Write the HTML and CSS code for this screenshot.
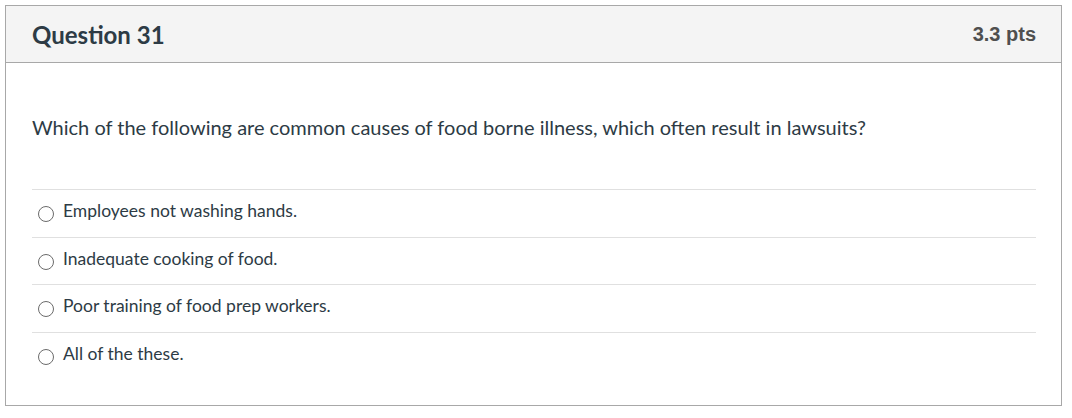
FILE: index.html
```html
<!DOCTYPE html>
<html>
<head>
<meta charset="utf-8">
<link rel="stylesheet" href="styles.css">
</head>
<body>
<div class="question">
  <div class="header">
    <span class="title">Question 31</span>
    <span class="pts">3.3 pts</span>
  </div>
  <div class="content">
    <p class="text">Which of the following are common causes of food borne illness, which often result in lawsuits?</p>
    <div class="answers">
      <label class="answer"><span class="radio"></span><span class="label">Employees not washing hands.</span></label>
      <label class="answer"><span class="radio"></span><span class="label">Inadequate cooking of food.</span></label>
      <label class="answer"><span class="radio"></span><span class="label">Poor training of food prep workers.</span></label>
      <label class="answer"><span class="radio"></span><span class="label">All of the these.</span></label>
    </div>
  </div>
</div>
</body>
</html>
```

FILE: styles.css
```css
html, body {
  margin: 0;
  padding: 0;
  background: #fff;
}
body {
  padding: 5px 10px 0 5px;
  font-family: Lato, "Open Sans", sans-serif;
  color: #2d3b45;
}
.question {
  border: 1px solid #a8a8a8;
  width: 1057px;
  box-sizing: border-box;
  height: 401px;
}
.header {
  display: flex;
  justify-content: space-between;
  align-items: center;
  background: #f4f4f4;
  border-bottom: 1px solid #a8a8a8;
  height: 56px;
  padding: 0 25px 0 26px;
}
.title {
  font-size: 24px;
  font-weight: bold;
}
.pts {
  font-family: "Liberation Sans", Arial, sans-serif;
  font-size: 20px;
  font-weight: bold;
  color: #4f4f4f;
}
.content {
  padding: 0 25px 0 26px;
}
.text {
  margin: 0 0 53px 0;
  padding-top: 52px;
  height: 73px;
  font-size: 20px;
  line-height: 24px;
  box-sizing: border-box;
}
.answers {
  display: flex;
  flex-direction: column;
}
.answer {
  display: flex;
  align-items: flex-start;
  gap: 9px;
  height: 37px;
  padding-top: 10px;
  border-top: 1px solid #e0e0e0;
  padding-left: 6px;
  font-size: 17.5px;
  line-height: 21px;
}
.answer:nth-child(2) {
  height: 36px;
}
.radio {
  flex: none;
  width: 16px;
  height: 16px;
  margin-top: 6px;
  border: 1px solid #6b6b6b;
  border-radius: 50%;
  box-sizing: border-box;
  background: #fff;
}
```
